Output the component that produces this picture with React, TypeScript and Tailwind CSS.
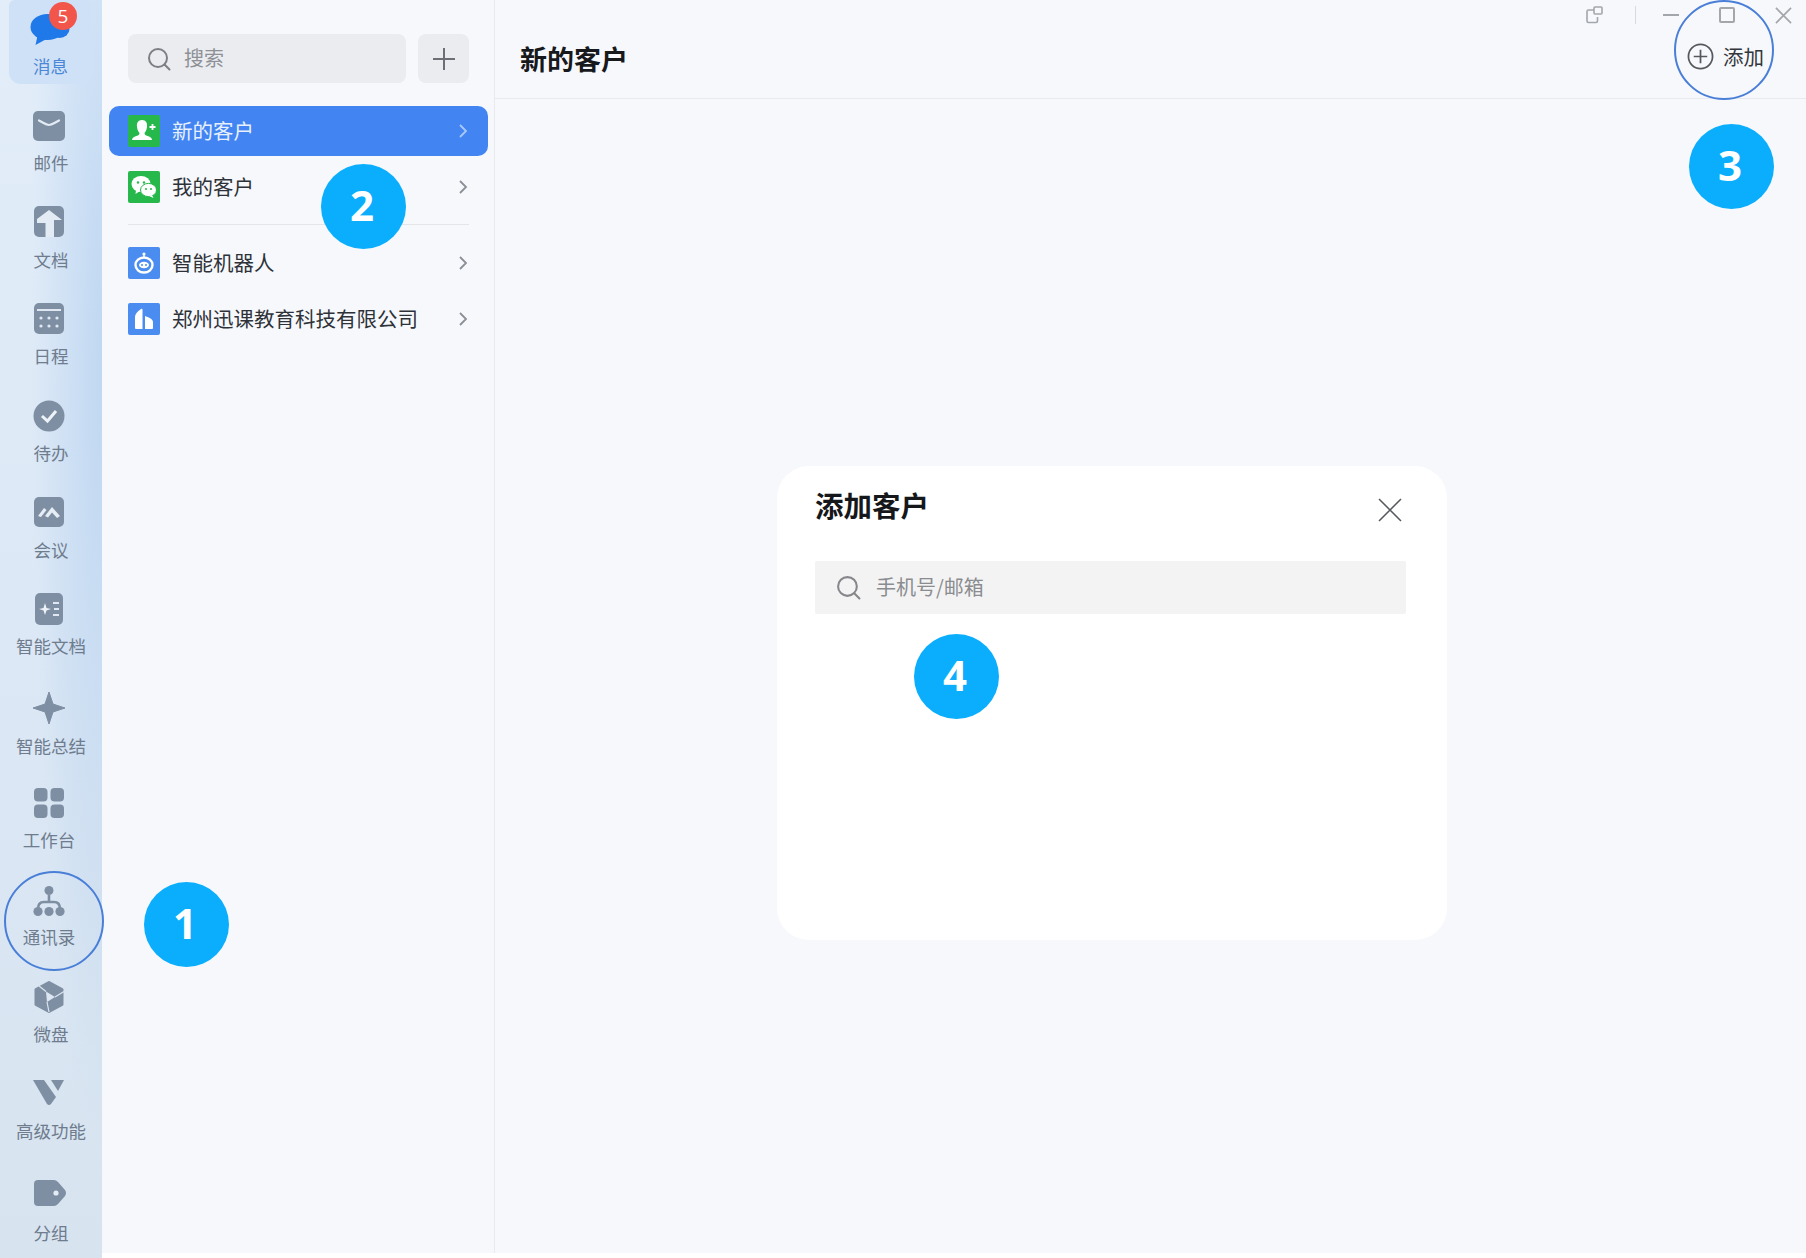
import React from "react";

const CJK = "font-['Noto_Sans_CJK_SC','Noto_Sans',sans-serif]";
const G = "#7f8fa3";

function Icon({ children, className = "w-8 h-8" }: { children: React.ReactNode; className?: string }) {
  return (
    <svg viewBox="0 0 32 32" className={className}>
      {children}
    </svg>
  );
}

const MailIcon = () => (
  <Icon>
    <rect x="0" y="1" width="32" height="30" rx="5" fill={G} />
    <path d="M6 10.5 C11 13 13 15 16 15 C19 15 21 13 26 10.5" fill="none" stroke="#e3ebf4" strokeWidth="2.2" strokeLinecap="round" />
  </Icon>
);
const DocIcon = () => (
  <Icon>
    <rect x="1" y="0" width="30" height="31" rx="5" fill={G} />
    <path d="M16 4 L29 14 H21 V31 H12.5 V17 H4 V13 Z" fill="#e3ebf4" />
  </Icon>
);
const CalIcon = () => (
  <Icon>
    <rect x="1" y="0" width="30" height="31" rx="5" fill={G} />
    <rect x="4" y="6" width="24" height="2" fill="#dfe8f2" />
    <g fill="#dfe8f2">
      <circle cx="8" cy="15" r="1.6" /><circle cx="16" cy="15" r="1.6" /><circle cx="24" cy="15" r="1.6" />
      <circle cx="8" cy="23" r="1.6" /><circle cx="16" cy="23" r="1.6" /><circle cx="24" cy="23" r="1.6" />
    </g>
  </Icon>
);
const TodoIcon = () => (
  <Icon>
    <circle cx="16" cy="16" r="15.5" fill={G} />
    <path d="M9 16 L14.5 21 L23 11" fill="none" stroke="#eef3f8" strokeWidth="3" />
  </Icon>
);
const MeetIcon = () => (
  <Icon>
    <rect x="1" y="1" width="30" height="30" rx="5" fill={G} />
    <path d="M5 20 L11 12 L13.5 14 L8 21 Z" fill="#e6edf5" />
    <path d="M12 20 L19 11 L27 20 L24 22 L19 16.5 L15 21.5 Z" fill="#e6edf5" />
  </Icon>
);
const SmartDocIcon = () => (
  <Icon>
    <rect x="2" y="0" width="28" height="32" rx="5" fill={G} />
    <path d="M12 10 L13.5 15 L18 16 L13.5 17.5 L12 22 L10.5 17.5 L6 16 L10.5 15 Z" fill="#eef3f8" />
    <path d="M20 10 H26 M21 16 H26 M20 22 H26" stroke="#dfe8f2" strokeWidth="2" />
  </Icon>
);
const SparkIcon = () => (
  <Icon>
    <path d="M16 0 L20 12 L32 16 L20 20 L16 32 L12 20 L0 16 L12 12 Z" fill={G} stroke={G} strokeWidth="1" strokeLinejoin="round" />
  </Icon>
);
const GridIcon = () => (
  <Icon>
    <rect x="1" y="1" width="13.5" height="13.5" rx="4" fill={G} />
    <rect x="17.5" y="1" width="13.5" height="13.5" rx="4" fill={G} />
    <rect x="1" y="17.5" width="13.5" height="13.5" rx="4" fill={G} />
    <rect x="17.5" y="17.5" width="13.5" height="13.5" rx="4" fill={G} />
  </Icon>
);
const OrgIcon = () => (
  <Icon>
    <circle cx="16" cy="4.5" r="4.5" fill={G} />
    <path d="M5 23 Q5 16 11 16 H21 Q27 16 27 23 M16 9 V16" fill="none" stroke={G} strokeWidth="2.6" />
    <circle cx="5" cy="25.5" r="4.6" fill={G} /><circle cx="16" cy="25.5" r="4.6" fill={G} /><circle cx="27" cy="25.5" r="4.6" fill={G} />
  </Icon>
);
const DiskIcon = () => (
  <Icon>
    <path d="M16 1.5 L29 8.5 V23.5 L16 30.5 L3 23.5 V8.5 Z" fill={G} stroke={G} strokeWidth="3" strokeLinejoin="round" />
    <path d="M13 10.5 L22 16 L14 21 Z" fill="#dbe6f2" />
    <path d="M22 16 L31 10.5 M14 21 L16 31 M13 10.5 L6 5" stroke="#dbe6f2" strokeWidth="1.2" />
  </Icon>
);
const VIcon = () => (
  <Icon>
    <path d="M0 2 H11 L23 19 L18 26 Q16 28 14 26 Z" fill={G} />
    <path d="M18 2 H31 L25 13 Z" fill={G} />
  </Icon>
);
const TagIcon = () => (
  <Icon className="w-[34px] h-8">
    <path d="M5 3 H21 Q23 3 25 5 L32 13 Q34 16 32 19 L25 27 Q23 29 21 29 H5 Q1 29 1 25 V7 Q1 3 5 3 Z" fill={G} />
    <circle cx="23" cy="16" r="2.6" fill="#e3ebf4" />
  </Icon>
);

const navItems = [
  { label: "邮件", Ic: MailIcon, h: "h-[96px]", mt: "mt-[5px]", lx: "" },
  { label: "文档", Ic: DocIcon, h: "h-[97px]", mt: "mt-[6px]", lx: "" },
  { label: "日程", Ic: CalIcon, h: "h-[97px]", mt: "mt-[5px]", lx: "" },
  { label: "待办", Ic: TodoIcon, h: "h-[96px]", mt: "mt-[5px]", lx: "" },
  { label: "会议", Ic: MeetIcon, h: "h-[97px]", mt: "mt-[6px]", lx: "" },
  { label: "智能文档", Ic: SmartDocIcon, h: "h-[99px]", mt: "mt-[5px]", lx: "" },
  { label: "智能总结", Ic: SparkIcon, h: "h-[95px]", mt: "mt-[6px]", lx: "" },
  { label: "工作台", Ic: GridIcon, h: "h-[99px]", mt: "mt-[5px]", lx: "pr-[4px]" },
  { label: "通讯录", Ic: OrgIcon, h: "h-[95px]", mt: "mt-[3px]", lx: "pr-[4px]" },
  { label: "微盘", Ic: DiskIcon, h: "h-[97px]", mt: "mt-[5px]", lx: "" },
  { label: "高级功能", Ic: VIcon, h: "h-[103px]", mt: "mt-[5px]", lx: "" },
  { label: "分组", Ic: TagIcon, h: "h-[60px]", mt: "mt-[12px]", lx: "" },
];

function NavItem({ label, Ic, h, mt, lx }: (typeof navItems)[number]) {
  return (
    <div className={`${h} w-full flex flex-col items-center shrink-0`}>
      <div className="h-10 flex items-center justify-center pr-[4px]">
        <Ic />
      </div>
      <div className={`${mt} ${lx} h-6 leading-6 text-[17.5px] text-[#6e7c8e] whitespace-nowrap`}>{label}</div>
    </div>
  );
}

function SearchGlyph({ className }: { className: string }) {
  return (
    <svg viewBox="0 0 24 24" className={className} fill="none" stroke="currentColor" strokeWidth="2">
      <circle cx="11" cy="11" r="9" />
      <path d="M17.5 17.5 L22.5 22.5" strokeLinecap="round" />
    </svg>
  );
}

function Chevron({ light }: { light?: boolean }) {
  return (
    <svg viewBox="0 0 10 16" className="w-[10px] h-4" fill="none" stroke={light ? "#a9c8fa" : "#8b8f96"} strokeWidth="1.8">
      <path d="M2 2 L8 8 L2 14" />
    </svg>
  );
}

const SquareBg = ({ bg, children }: { bg: string; children: React.ReactNode }) => (
  <div className={`w-8 h-8 rounded-[2px] ${bg} flex items-center justify-center shrink-0`}>{children}</div>
);

const UserAdd = () => (
  <svg viewBox="0 0 32 32" className="w-8 h-8">
    <path d="M14 5 C18 5 19.5 8 19 12 C18.7 15 17.5 17 16.5 18 C16.5 20 18 20.5 21 21.5 C23 22.3 24 23.5 24 25 L4 25 C4 23.5 5 22.3 7 21.5 C10 20.5 11.5 20 11.5 18 C10.5 17 9.3 15 9 12 C8.5 8 10 5 14 5 Z" fill="#fff" />
    <path d="M24.5 9 V15 M21.5 12 H27.5" stroke="#fff" strokeWidth="1.8" />
  </svg>
);
const Wechat = () => (
  <svg viewBox="0 0 32 32" className="w-8 h-8">
    <ellipse cx="13" cy="13" rx="9.5" ry="8" fill="#fff" />
    <path d="M8 19 L7.5 23 L12 20 Z" fill="#fff" />
    <ellipse cx="20.5" cy="19" rx="8" ry="6.6" fill="#fff" stroke="#26b84a" strokeWidth="1" />
    <path d="M24 24 L25.5 27 L21 25 Z" fill="#fff" />
    <circle cx="10" cy="11.5" r="1.2" fill="#26b84a" /><circle cx="16" cy="11.5" r="1.2" fill="#26b84a" />
    <circle cx="18" cy="18" r="1" fill="#26b84a" /><circle cx="23" cy="18" r="1" fill="#26b84a" />
  </svg>
);
const Robot = () => (
  <svg viewBox="0 0 32 32" className="w-8 h-8">
    <circle cx="16" cy="7" r="1.6" fill="#fff" />
    <path d="M16 8 V11" stroke="#fff" strokeWidth="1.4" />
    <ellipse cx="16" cy="18" rx="8.5" ry="7.5" fill="none" stroke="#fff" strokeWidth="2.4" />
    <ellipse cx="16" cy="18" rx="5" ry="3.2" fill="#fff" />
    <circle cx="14" cy="18" r="1" fill="#4a8cef" /><circle cx="18" cy="18" r="1" fill="#4a8cef" />
  </svg>
);
const Company = () => (
  <svg viewBox="0 0 32 32" className="w-8 h-8">
    <path d="M7 14 C7 11 9 9 13 6 C14 5.5 14.5 6 14.5 7 V26 H8 Q7 26 7 25 Z" fill="#fff" />
    <path d="M17 13 C20 14 25 16 25 19 V25 Q25 26 24 26 H17 Z" fill="#fff" />
  </svg>
);

const rows = [
  { label: "新的客户", icon: <SquareBg bg="bg-[#27b84b]"><UserAdd /></SquareBg>, active: true, wrap: "mt-[23px] h-[50px]" },
  { label: "我的客户", icon: <SquareBg bg="bg-[#27b84b]"><Wechat /></SquareBg>, active: false, wrap: "mt-[6px] h-[50px]" },
];
const rows2 = [
  { label: "智能机器人", icon: <SquareBg bg="bg-[#4a8cef]"><Robot /></SquareBg>, wrap: "mt-[13px] h-[50px]" },
  { label: "郑州迅课教育科技有限公司", icon: <SquareBg bg="bg-[#4a8cef]"><Company /></SquareBg>, wrap: "mt-[6px] h-[50px]" },
];

function Row({ label, icon, active, wrap }: { label: string; icon: React.ReactNode; active?: boolean; wrap: string }) {
  return (
    <div className={`${wrap} ml-[7px] mr-[6px] pl-[19px] pr-[20px] flex items-center rounded-[10px] ${active ? "bg-[#4285f2] text-[#e8f0fe]" : "text-[#2e3238]"}`}>
      {icon}
      <span className="ml-3 text-[20.5px] leading-[30px] pb-[2px] flex-1 whitespace-nowrap">{label}</span>
      <Chevron light={active} />
    </div>
  );
}

function Marker({ n, className }: { n: number; className: string }) {
  return (
    <div className={`absolute w-[85px] h-[85px] rounded-full bg-[#0aaefc] text-white flex items-center justify-center pb-[5px] pr-[3px] font-['Open_Sans',sans-serif] font-bold text-[42px] ${className}`}>
      {n}
    </div>
  );
}

export default function App() {
  return (
    <div className={`relative w-[1806px] h-[1258px] flex overflow-hidden bg-white ${CJK}`}>
      {/* Sidebar */}
      <aside className="w-[102px] h-full shrink-0 flex flex-col bg-[radial-gradient(ellipse_70px_800px_at_102px_350px,rgba(150,190,235,0.42),rgba(150,190,235,0)),linear-gradient(180deg,#e2edf9_0%,#dce8f5_50%,#d7e3ef_100%)]">
        <div className="ml-[9px] w-[82px] h-[84px] rounded-b-[12px] rounded-t-[6px] bg-[#cfe1f7] flex flex-col items-center pt-[10px] shrink-0">
          <div className="relative h-10 w-8 flex items-center justify-center -ml-[2px]">
            <svg viewBox="0 0 40 36" className="w-[41px] h-[36px] shrink-0">
              <ellipse cx="18" cy="15" rx="17" ry="13" fill="#1f79e8" />
              <path d="M8 24 L6 33 L17 27 Z" fill="#1f79e8" />
              <ellipse cx="30" cy="17" rx="10" ry="9" fill="#1f79e8" />
            </svg>
            <div className="absolute -top-[8px] -right-[12px] w-[28px] h-[28px] rounded-full bg-[#f2554a] text-white flex items-center justify-center text-[19px] font-['Open_Sans',sans-serif]">
              5
            </div>
          </div>
          <div className="mt-[4px] h-6 leading-6 text-[17.5px] text-[#4a87d6] pl-[1px]">消息</div>
        </div>
        <div className="mt-[22px] flex flex-col">
          {navItems.map((it) => (
            <NavItem key={it.label} {...it} />
          ))}
        </div>
      </aside>

      {/* List panel */}
      <section className="w-[393px] h-[1253px] shrink-0 bg-[#f6f8fc] border-r border-[#e8eaee] flex flex-col">
        <div className="mt-[34px] ml-[26px] flex gap-[12px] shrink-0">
          <div className="w-[278px] h-[49px] rounded-[8px] bg-[#ebecf0] flex items-center pl-[19px] text-[#7c7f85]">
            <SearchGlyph className="w-6 h-6" />
            <span className="ml-[13px] text-[20px] leading-[28px] pb-[2px] text-[#8d9096]">搜索</span>
          </div>
          <div className="w-[51px] h-[49px] rounded-[8px] bg-[#ebecf0] flex items-center justify-center">
            <svg viewBox="0 0 22 22" className="w-[22px] h-[22px]" stroke="#6c6f75" strokeWidth="2">
              <path d="M11 0 V22 M0 11 H22" />
            </svg>
          </div>
        </div>
        {rows.map((r) => (
          <Row key={r.label} {...r} />
        ))}
        <div className="mt-[12px] ml-[26px] w-[341px] h-px bg-[#e3e5e9] shrink-0" />
        {rows2.map((r) => (
          <Row key={r.label} {...r} />
        ))}
      </section>

      {/* Main */}
      <main className="flex-1 h-[1253px] bg-[#f6f8fc] relative flex flex-col">
        <header className="h-[99px] shrink-0 border-b border-[#e8eaee] flex items-center pl-[25px] pr-[42px] pt-[21px]">
          <h1 className="text-[27px] font-bold text-[#17191c] flex-1">新的客户</h1>
          <svg viewBox="0 0 28 28" className="w-[27px] h-[27px] mt-[-6px]" fill="none" stroke="#55585d" strokeWidth="1.8">
            <circle cx="14" cy="14" r="12.5" />
            <path d="M14 7 V21 M7 14 H21" />
          </svg>
          <span className="ml-[9px] text-[20.5px] text-[#33363b] mt-[-6px]">添加</span>
        </header>

        {/* Window controls */}
        <div className="absolute top-[6px] right-[14px] flex items-center text-[#a3a6ab]">
          <svg viewBox="0 0 18 18" className="w-[18px] h-[18px]" fill="none" stroke="#a3a6ab" strokeWidth="1.6">
            <rect x="8" y="1" width="8" height="7" rx="1" />
            <path d="M8 4 H2.5 Q1 4 1 5.5 V15 Q1 16.5 2.5 16.5 H10 Q11.5 16.5 11.5 15 V11" />
          </svg>
          <div className="ml-[31px] w-px h-[18px] bg-[#d8dadf]" />
          <div className="ml-[27px] w-[16px] h-[2px] bg-[#a3a6ab]" />
          <div className="ml-[40px] w-[16px] h-[16px] rounded-[2px] border-2 border-[#a3a6ab]" />
          <svg viewBox="0 0 18 18" className="ml-[40px] w-[17px] h-[17px]" stroke="#a3a6ab" strokeWidth="1.8">
            <path d="M1 1 L17 17 M17 1 L1 17" />
          </svg>
        </div>

        {/* Dialog */}
        <div className="mt-[367px] ml-[282px] w-[670px] h-[474px] rounded-[32px] bg-white shrink-0 px-[38px] pt-[18px]">
          <div className="flex items-start h-[77px] pr-[7px]">
            <h2 className="flex-1 text-[28.5px] leading-[42px] font-bold text-[#15171a]">添加客户</h2>
            <svg viewBox="0 0 24 24" className="w-6 h-6 mt-[14px]" stroke="#55585c" strokeWidth="1.5">
              <path d="M1 1 L23 23 M23 1 L1 23" />
            </svg>
          </div>
          <div className="w-[591px] h-[53px] bg-[#f3f3f3] rounded-[2px] flex items-center pl-[21px] text-[#85878b]">
            <SearchGlyph className="w-[25px] h-[25px]" />
            <span className="ml-[15px] text-[20px] leading-[28px] pb-[2px] text-[#8a8c90]">手机号/邮箱</span>
          </div>
        </div>
      </main>

      {/* Annotations */}
      <div className="absolute left-[4px] top-[871px] w-[100px] h-[100px] rounded-full border-2 border-[#4a7fd8]" />
      <div className="absolute left-[1674px] top-0 w-[100px] h-[100px] rounded-full border-2 border-[#4a7fd8]" />
      <Marker n={1} className="left-[144px] top-[882px]" />
      <Marker n={2} className="left-[321px] top-[164px]" />
      <Marker n={3} className="left-[1689px] top-[124px]" />
      <Marker n={4} className="left-[914px] top-[634px]" />
    </div>
  );
}
